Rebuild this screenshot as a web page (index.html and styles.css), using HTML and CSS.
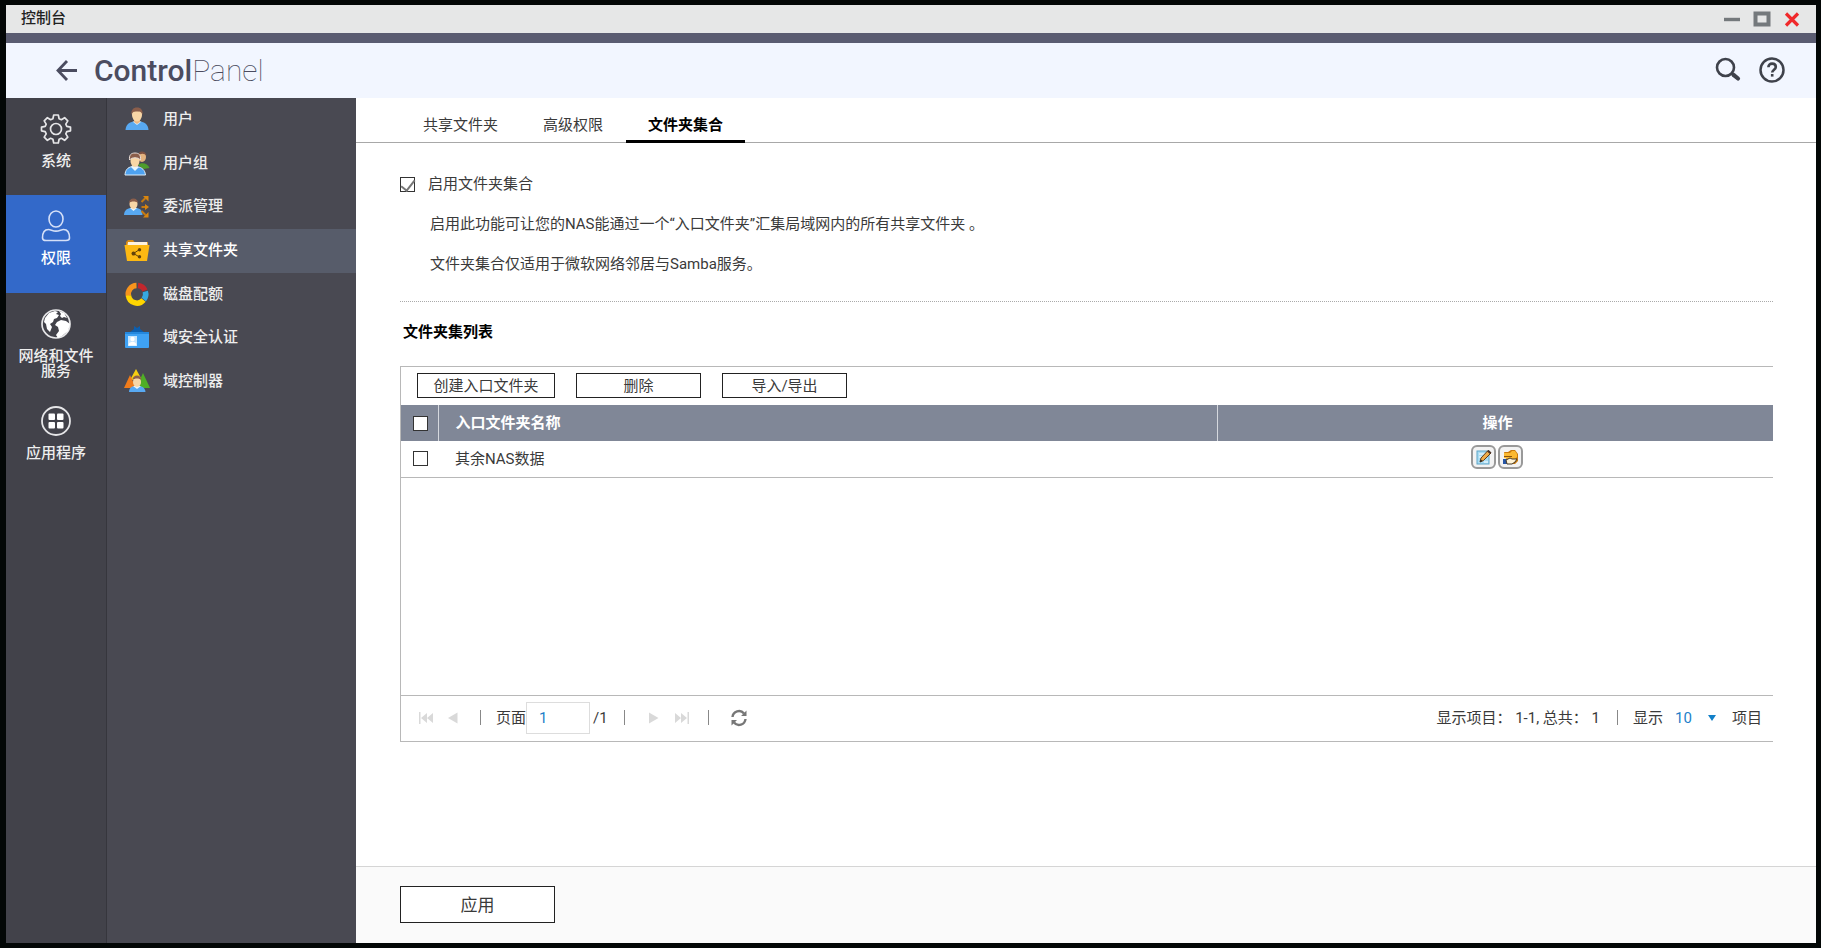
FILE: index.html
```html
<!DOCTYPE html>
<html lang="zh-CN">
<head>
  <meta charset="UTF-8" />
  <meta name="viewport" content="width=device-width, initial-scale=1" />
  <title>控制台</title>
  <link rel="stylesheet" href="styles.css">
</head>

<body>
  <div class="window">
    <div class="titlebar">
      <span class="title">控制台</span>
      <div class="window-buttons">
        <button type="button" aria-label="最小化">
          <svg width="18" height="18" viewBox="0 0 18 18"><path d="M1 9.5h16" stroke="#74797c" stroke-width="3.4"/></svg>
        </button>
        <button type="button" aria-label="最大化">
          <svg width="18" height="18" viewBox="0 0 18 18"><rect x="2.5" y="3.5" width="13" height="11" fill="none" stroke="#74797c" stroke-width="4"/></svg>
        </button>
        <button type="button" aria-label="关闭">
          <svg width="18" height="18" viewBox="0 0 18 18"><path d="M3 3.500l12 12M15 3.500l-12 12" stroke="#f0292b" stroke-width="3.200"/></svg>
        </button>
      </div>
    </div>

    <header class="header">
      <button type="button" class="back" aria-label="返回">
        <svg width="22" height="22" viewBox="0 0 22 22"><path d="M21 10.500H2.500M11 1L2 10.500 11 20" fill="none" stroke="#4b4c60" stroke-width="2.800"/></svg>
      </button>
      <h1 class="logo"><b>Control</b><span>Panel</span></h1>
      <div class="header-tools">
        <button type="button" aria-label="搜索">
          <svg width="26" height="26" viewBox="0 0 26 26"><circle cx="10.500" cy="10.500" r="8.500" fill="none" stroke="#3f424b" stroke-width="2.600"/><path d="M16 16l2.500 2" stroke="#3f424b" stroke-width="2.600"/><path d="M18.500 17.800l4.500 3.700" stroke="#3f424b" stroke-width="4.200" stroke-linecap="round"/></svg>
        </button>
        <button type="button" aria-label="帮助">
          <svg width="26" height="26" viewBox="0 0 26 26"><circle cx="13" cy="13" r="11.500" fill="none" stroke="#3f424b" stroke-width="2.500"/><path d="M9.400 10.300c0-2.300 1.500-3.700 3.700-3.700s3.700 1.300 3.700 3.300c0 2.600-3.600 2.900-3.600 5.600" fill="none" stroke="#3f424b" stroke-width="2.600"/><rect x="11.900" y="17" width="2.600" height="2.600" fill="#3f424b"/></svg>
        </button>
      </div>
    </header>

    <div class="body">
      <nav class="main-nav">
        <a href="#system">
          <svg width="32" height="32" viewBox="0 0 32 32" fill="none" stroke="#e6e6e8" stroke-width="1.700" stroke-linejoin="round"><circle cx="16" cy="16" r="5.500"/><path d="M13.700 2h4.600l.8 3.700 2.300 1 3.200-2 3.200 3.200-2 3.200 1 2.300 3.700.8v3.600l-3.700.8-1 2.300 2 3.200-3.200 3.200-3.200-2-2.300 1-.8 3.700h-4.600l-.8-3.700-2.300-1-3.200 2-3.200-3.200 2-3.200-1-2.300-3.700-.8v-3.600l3.700-.8 1-2.300-2-3.200 3.200-3.200 3.200 2 2.300-1z"/></svg>
          <span>系统</span>
        </a>
        <a href="#privilege" class="active">
          <svg width="32" height="32" viewBox="0 0 32 32" fill="none" stroke="#d5e0f8" stroke-width="1.600"><ellipse cx="16" cy="9" rx="7" ry="8"/><path d="M6 30.500c-2 0-3.500-.6-3.500-2.500 0-5 2-8.500 6-8.500 2.300 0 4 1.600 7.500 1.600s5.200-1.600 7.500-1.600c4 0 6 3.500 6 8.500 0 1.900-1.500 2.500-3.500 2.500z"/></svg>
          <span>权限</span>
        </a>
        <a href="#network">
          <svg width="32" height="32" viewBox="0 0 32 32"><circle cx="16" cy="16" r="14" fill="none" stroke="#e6e6e8" stroke-width="1.700"/><path fill="#fff" d="M5 10l4-5 6-2 3 1-2 2 3 1-2 3-3 1-1 3-3 2 2 3-2 5-3-3-1-5-2-2zM19 3l5 2 3 5-3-1-2 1-2-2 1-2zM17 14l4-2 5 1 4 3-2 7-6 5-4 2-2-3 3-4-1-4-3-2z"/></svg>
          <span>网络和文件服务</span>
        </a>
        <a href="#apps">
          <svg width="32" height="32" viewBox="0 0 32 32"><circle cx="16" cy="16" r="14" fill="none" stroke="#e6e6e8" stroke-width="1.800"/><g fill="#fff"><rect x="8.500" y="8.500" width="6.500" height="6.500" rx="1"/><rect x="17" y="8.500" width="6.500" height="6.500" rx="1"/><rect x="8.500" y="17" width="6.500" height="6.500" rx="1"/><rect x="17" y="17" width="6.500" height="6.500" rx="1"/></g></svg>
          <span>应用程序</span>
        </a>
      </nav>

      <nav class="sub-nav">
        <div class="sub-list">
          <a href="#users">
            <svg width="26" height="26" viewBox="0 0 26 26"><path d="M1.500 24c.3-5 3-7.500 8-8.500h7c5 1 7.700 3.500 8 8.500z" fill="#58a9f2"/><path d="M8.500 15.500l4.500 3.500 4.500-3.500z" fill="#d8ecfb"/><path d="M10 12h6v4l-3 2-3-2z" fill="#e9b583"/><ellipse cx="13" cy="9" rx="5" ry="6.500" fill="#f8d6a6"/><path d="M7.300 9C7 4 9 1.500 13 1.500S19 4 18.700 9c-1-3-2-3.500-5.700-3.500S8.300 6 7.300 9z" fill="#8b5e4b"/></svg>
            <span>用户</span>
          </a>
          <a href="#groups">
            <svg width="26" height="26" viewBox="0 0 26 26"><path d="M14 15c3-3 10-2 11.500 3l-6 1z" fill="#4e9c2c"/><ellipse cx="18" cy="7" rx="4" ry="5" fill="#e3b27e"/><path d="M13.500 6c0-6 9-6 9 0-2-3-6-3-9 0z" fill="#7d5041"/><path d="M1 25c.3-5 2.500-7.500 7-8.500h5c5 1 8 3.500 8.500 8.500z" fill="#4ea2f0" stroke="#dcecf8"/><path d="M7 17l4 4 4-4z" fill="#e8f4fc"/><ellipse cx="11" cy="11" rx="4.500" ry="6" fill="#f8d6a6"/><path d="M5.500 10C5 5 7 3 11 3s6 2 5.500 7c-2-3-9-3-11 0z" fill="#8b5e4b" stroke="#e6ddd8"/></svg>
            <span>用户组</span>
          </a>
          <a href="#delegate">
            <svg width="26" height="26" viewBox="0 0 26 26"><path d="M0 22c.3-4 2-6 6-7h7c4 1 5.500 3 5.500 7z" fill="#58a9f2"/><path d="M6 15l3.500 3 3.500-3z" fill="#e8f4fc"/><ellipse cx="9.500" cy="11" rx="4" ry="5" fill="#f8d6a6"/><path d="M5 10c0-6 9-6 9 0-2-2-7-2-9 0z" fill="#8b5e4b"/><g stroke="#c57a12" stroke-width="2"><path d="M17.500 9l4-4M17.500 14h4M17.500 18l4 4"/></g><path d="M19 3h5.500v5.500zM21 11l4 3-4 3zM19 24.500h5.500V19z" fill="#d9860f"/></svg>
            <span>委派管理</span>
          </a>
          <a href="#shared" class="active">
            <svg width="26" height="26" viewBox="0 0 26 26"><path d="M2 5l2-2h5l1.500 2H24v6H2z" fill="#d78b14"/><path d="M4 5h19l.5 3H3.500z" fill="#fdf3df"/><path d="M.5 8h25L23 24H3z" fill="#fdb913"/><path d="M15.500 12.500l-6 4 6 3.500" fill="none" stroke="#63420a" stroke-width="1"/><g fill="#63420a"><circle cx="9.500" cy="16.500" r="2"/><circle cx="15.500" cy="12.800" r="1.700"/><circle cx="15.500" cy="19.800" r="1.700"/></g></svg>
            <span>共享文件夹</span>
          </a>
          <a href="#quota">
            <svg width="26" height="26" viewBox="0 0 26 26" fill="none" stroke-width="5.500"><path d="M4.500 15A8.500 8.500 0 0 1 12.500 4.500" stroke="#f7941d"/><path d="M14 4.500a8.500 8.500 0 0 1 7 5" stroke="#c1272d"/><path d="M21.300 10.500a8.500 8.500 0 0 1-1.500 8" stroke="#36a9e1"/><path d="M19.500 19A8.500 8.500 0 0 1 4.500 14.500" stroke="#ffd500"/></svg>
            <span>磁盘配额</span>
          </a>
          <a href="#domain">
            <svg width="26" height="26" viewBox="0 0 26 26"><path d="M6 8l4-3V2l3 2 3-2v3l4 3z" fill="#0d5eae"/><rect x="1" y="8" width="24" height="16" rx="1" fill="#3fa2f4"/><path d="M1 8h24v2H1z" fill="#2488de"/><rect x="4" y="12" width="9" height="10" fill="#c9e6fd"/><circle cx="8.500" cy="15" r="2.200" fill="#fff"/><path d="M4.500 21.500c0-5 8-5 8 0z" fill="#fff"/></svg>
            <span>域安全认证</span>
          </a>
          <a href="#controller">
            <svg width="26" height="26" viewBox="0 0 26 26"><path d="M12 1l6 11H6z" fill="#f6cf12"/><path d="M6 7l6 13H0z" fill="#ef7b1a"/><path d="M19 5l7 15H12z" fill="#4fae26"/><path d="M5 24c.3-4 2-5.500 6-6h4c4 .5 6 2 6.500 6z" fill="#58a9f2"/><path d="M9 18l4 3 4-3z" fill="#e8f4fc"/><ellipse cx="13" cy="14" rx="4" ry="5" fill="#f8d6a6"/><path d="M8.500 12c0-6 9-6 9 0-2-2-7-2-9 0z" fill="#8b5e4b"/></svg>
            <span>域控制器</span>
          </a>
        </div>
      </nav>

      <main class="content">
        <div class="tabs">
          <a href="#tab-shared">共享文件夹</a>
          <a href="#tab-advanced">高级权限</a>
          <a href="#tab-aggregation" class="active">文件夹集合</a>
        </div>

        <div class="panel">
          <label class="enable"><input type="checkbox" checked>启用文件夹集合</label>
          <div class="notes">
            <p>启用此功能可让您的NAS能通过一个“入口文件夹”汇集局域网内的所有共享文件夹 。</p>
            <p>文件夹集合仅适用于微软网络邻居与Samba服务。</p>
          </div>

          <h2>文件夹集列表</h2>

          <div class="grid-box">
            <div class="toolbar">
              <button type="button" class="btn wide">创建入口文件夹</button>
              <button type="button" class="btn">删除</button>
              <button type="button" class="btn">导入/导出</button>
            </div>

            <div class="grid-body">
              <table>
                <thead>
                  <tr>
                    <th class="col-check"><input type="checkbox" aria-label="全选"></th>
                    <th class="col-name">入口文件夹名称</th>
                    <th class="col-action">操作</th>
                  </tr>
                </thead>
                <tbody>
                  <tr>
                    <td class="col-check"><input type="checkbox" aria-label="选择 其余NAS数据"></td>
                    <td class="col-name">其余NAS数据</td>
                    <td class="col-action">
                      <div class="actions">
                        <button type="button" aria-label="编辑">
                          <svg width="16" height="16" viewBox="0 0 16 16"><rect x="1" y="2" width="12" height="13" fill="#a9dcf3" stroke="#5fa6c8"/><path d="M3 5h6M3 8h4M8 13h4" stroke="#fff"/><path d="M4 13l1-4 7-7.500 3 2.500-7.500 7.500z" fill="#f0ad4a" stroke="#5e3c1a"/><path d="M4 13l.7-2.500 1.800 1.500z" fill="#222"/><path d="M11 2.500L12.500 1 15.500 3.500 14 5z" fill="#4a3328"/></svg>
                        </button>
                        <button type="button" aria-label="链接">
                          <svg width="16" height="16" viewBox="0 0 16 16"><path d="M1 3h4l3-2h4l3 4v7l-3 3H5z" fill="#c97a0c"/><path d="M1 4h6l2-2h3l2 3v3l-3 3-10-2z" fill="#fbb931"/><path d="M1 7.500h8" stroke="#8a5209"/><path d="M0 10h4v5H0z" fill="#2756a5"/><path d="M3 11l4-2 2 1h5l-2 3-3 2H4z" fill="#fff3d6" stroke="#473b28"/></svg>
                        </button>
                      </div>
                    </td>
                  </tr>
                </tbody>
              </table>
            </div>

            <div class="pager">
              <button type="button" class="nav-btn" aria-label="首页" disabled>
                <svg width="16" height="12" viewBox="0 0 16 12" fill="#d9d9d9"><path d="M1 0h1.500v12H1zM9 1v10L3 6zM15 1v10L9 6z"/></svg>
              </button>
              <button type="button" class="nav-btn" aria-label="上一页" disabled>
                <svg width="16" height="12" viewBox="0 0 16 12" fill="#d9d9d9"><path d="M11.500 .500v11L2 6z"/></svg>
              </button>
              <span class="sep"></span>
              <label for="page">页面</label>
              <input type="text" id="page" value="1">
              <span class="total">/1</span>
              <span class="sep wide"></span>
              <button type="button" class="nav-btn" aria-label="下一页" disabled>
                <svg width="16" height="12" viewBox="0 0 16 12" fill="#d9d9d9"><path d="M3 .500v11L12.500 6z"/></svg>
              </button>
              <button type="button" class="nav-btn" aria-label="末页" disabled>
                <svg width="16" height="12" viewBox="0 0 16 12" fill="#d9d9d9"><path d="M15 0h-1.500v12H15zM7 1v10l6-5zM1 1v10l6-5z"/></svg>
              </button>
              <span class="sep wide"></span>
              <button type="button" class="nav-btn" aria-label="刷新">
                <svg width="18" height="18" viewBox="0 0 18 18"><path d="M2.500 8A6.500 6.500 0 0 1 14 4.500M15.500 10A6.500 6.500 0 0 1 4 13.500" fill="none" stroke="#777" stroke-width="2.400"/><path d="M16.500 1.500V7H11zM1.500 16.500V11H7z" fill="#777"/></svg>
              </button>
              <div class="summary">
                <span>显示项目： 1-1, 总共： 1</span>
                <span class="sep"></span>
                <label for="size">显示</label>
                <span class="size-box">
                  <select id="size"><option>10</option></select>
                </span>
                <span>项目</span>
              </div>
            </div>
          </div>
        </div>

        <footer class="footer">
          <button type="button" class="apply">应用</button>
        </footer>
      </main>
    </div>
  </div>
</body>
</html>
```
FILE: styles.css
```css
* { box-sizing: border-box; }

body {
  margin: 0;
  background: #030706;
  color: #3a3a3a;
  font-family: Roboto, "Noto Sans CJK SC", sans-serif;
  font-size: 15px;
  line-height: 20px;
}

button, input, select {
  font: inherit;
  color: inherit;
}

button {
  padding: 0;
  border: none;
  background: none;
}

a {
  color: inherit;
  text-decoration: none;
}

svg {
  display: block;
  flex: none;
}

.window {
  display: flex;
  flex-direction: column;
  min-height: 100vh;
  border: 5px solid #030706;
  border-left-width: 6px;
}

/* title bar */
.titlebar {
  display: flex;
  justify-content: space-between;
  align-items: center;
  height: 28px;
  padding: 0 15px;
  background: #e6e7e7;
}

.title {
  padding-bottom: 2px;
  font-weight: 500;
  color: #222;
}

.window-buttons {
  display: flex;
  gap: 12px;
}

/* header */
.header {
  display: flex;
  align-items: center;
  height: 65px;
  padding: 0 31px 0 50px;
  border-top: 10px solid #5a5c71;
  background: #f2f6ff;
}

.logo {
  margin: 0 auto 0 16px;
  font-size: 30px;
  line-height: 40px;
  font-weight: 100;
  color: #4b4c60;
}

.logo b { font-weight: 500; }

.header-tools {
  display: flex;
  gap: 18px;
  padding-bottom: 2px;
}

.body {
  display: flex;
  flex: 1;
}

/* left navigation */
.main-nav {
  width: 101px;
  border-right: 1px solid #36363d;
  background: #42424a;
  color: #eee;
  font-weight: 500;
  text-align: center;
}

.main-nav a {
  display: flex;
  flex-direction: column;
  align-items: center;
  gap: 9px;
  height: 97px;
  padding: 15px 12px 0;
  line-height: 15px;
}

.main-nav a.active {
  height: 98px;
  background: #3369c9;
  color: #fff;
}

.sub-nav {
  width: 249px;
  background: #494952;
  color: #eee;
  font-weight: 500;
}

.sub-list {
  display: grid;
  grid-auto-rows: 1fr;
  height: 306px;
}

.sub-list a {
  display: flex;
  align-items: center;
  gap: 13px;
  padding: 0 17px 2px;
}

.sub-list a.active {
  background: #575c6a;
  color: #fff;
}

/* content */
.content {
  display: flex;
  flex-direction: column;
  flex: 1;
  min-width: 0;
  background: #fff;
}

.tabs {
  display: flex;
  align-items: flex-end;
  gap: 1px;
  height: 45px;
  padding-left: 45px;
  border-bottom: 1px solid #a8a8a8;
}

.tabs a {
  height: 28px;
  margin-bottom: -1px;
  padding: 0 22px;
}

.tabs a.active {
  border-bottom: 3px solid #000;
  color: #000;
  font-weight: 700;
}

.panel {
  flex: 1;
  padding: 31px 43px 0 44px;
}

input[type="checkbox"] {
  display: block;
  appearance: none;
  width: 15px;
  height: 15px;
  margin: 0;
  border: 1px solid #333;
  background: #fff;
}

input[type="checkbox"]:checked {
  display: grid;
  justify-content: center;
}

input[type="checkbox"]:checked::after {
  content: "";
  width: 6px;
  height: 12px;
  margin-top: -1px;
  border: solid #777;
  border-width: 0 2px 2px 0;
  transform: rotate(38deg);
}

.enable {
  display: flex;
  align-items: center;
  gap: 13px;
}

.notes {
  padding: 20px 0 27px 30px;
  border-bottom: 1px dotted #aaa;
}

.notes p { margin: 0; }
.notes p + p { margin-top: 20px; }

h2 {
  margin: 20px 0 24px 3px;
  font-size: 15px;
  color: #000;
}

/* list */
.grid-box {
  border: 1px solid #b8b8b8;
  border-right: none;
}

.toolbar {
  display: flex;
  gap: 21px;
  height: 38px;
  padding: 6px 16px;
}

.btn {
  width: 125px;
  height: 25px;
  border: 1px solid #222;
  background: #fff;
  line-height: 20px;
}

.btn.wide { width: 138px; }

.grid-body { min-height: 290px; }

table {
  width: 100%;
  border-collapse: collapse;
  table-layout: fixed;
}

th, td {
  height: 36px;
  padding: 0;
}

th {
  background: #808797;
  color: #fff;
  text-align: left;
}

td { border-bottom: 1px solid #b8b8b8; }

th + th { border-left: 1px solid #d5d8de; }

.col-check {
  width: 37px;
  padding-left: 12px;
}

.col-name { padding-left: 17px; }

.col-action {
  width: 40.5%;
  padding-left: 4px;
  text-align: center;
}

.actions {
  display: flex;
  justify-content: center;
  gap: 2px;
  padding-bottom: 3px;
}

.actions button {
  display: grid;
  place-items: center;
  width: 25px;
  height: 24px;
  border: 2px solid #999;
  border-radius: 6px;
  background: #f3f3f3;
}

/* paging */
.pager {
  display: flex;
  align-items: center;
  height: 46px;
  padding: 0 11px 2px 17px;
  border-top: 1px solid #b8b8b8;
}

.nav-btn { margin-right: 12px; }

.sep {
  width: 1px;
  height: 15px;
  margin: 0 15px 0 6px;
  background: #888;
}

.sep.wide { margin-right: 21px; }

#page {
  width: 64px;
  height: 32px;
  padding: 0 12px;
  border: 1px solid #ddd;
  color: #1d7fc9;
}

.total {
  margin: 0 10px 0 3px;
}

.summary {
  display: flex;
  align-items: center;
  margin-left: auto;
}

.summary .sep { margin: 0 15px 0 17px; }

.size-box {
  display: flex;
  align-items: center;
  margin: 0 16px 0 12px;
  color: #1d7fc9;
}

.size-box::after {
  content: "";
  border: solid transparent;
  border-width: 6px 4px 0;
  border-top-color: #1280c8;
}

#size {
  appearance: none;
  width: 33px;
  padding: 0;
  border: none;
  background: none;
}

.footer {
  height: 77px;
  padding: 19px 44px;
  border-top: 1px solid #d5d5d5;
  background: #fafafa;
}

.apply {
  width: 155px;
  height: 37px;
  border: 1px solid #222;
  background: #fff;
  font-size: 17px;
}
```
